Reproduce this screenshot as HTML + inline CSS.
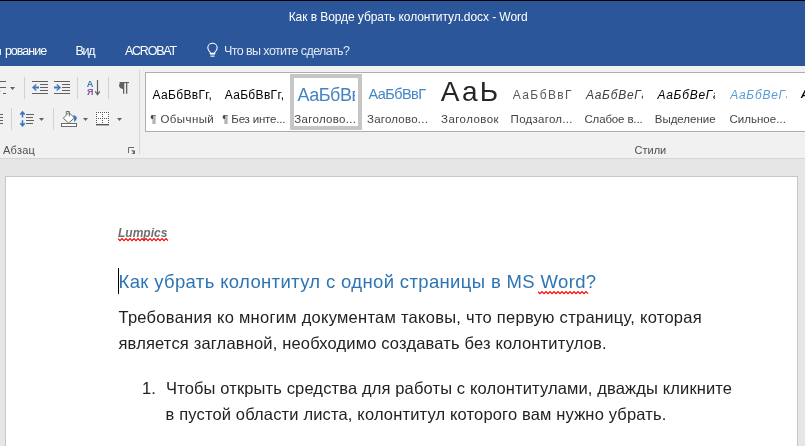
<!DOCTYPE html>
<html><head><meta charset="utf-8">
<style>
*{margin:0;padding:0;box-sizing:border-box}
body{will-change:transform}
html,body{width:805px;height:446px;overflow:hidden;background:#e6e6e6;font-family:"Liberation Sans",sans-serif}
.abs{position:absolute;white-space:nowrap}
#top{position:absolute;left:0;top:0;width:805px;height:66px;background:#2b579a;border-top:1px solid #000}
.tt{position:absolute;white-space:nowrap;color:#fff;font-size:12.5px}
#ribbon{position:absolute;left:0;top:66px;width:805px;height:93px;background:#f1f1f1;border-bottom:1px solid #d6d6d6}
.glab{position:absolute;white-space:nowrap;color:#505050;font-size:11px}
#gallery{position:absolute;left:145px;top:72px;width:700px;height:60px;background:#fff;border:1px solid #abadb3}
.smp{position:absolute;white-space:nowrap;font-size:11px}
.lbl{position:absolute;white-space:nowrap;font-size:11.5px;color:#444}
.clip{position:absolute;overflow:hidden;height:58px;top:73px}
#page{position:absolute;left:5px;top:176px;width:793px;height:300px;background:#fff;border:1px solid #c6c6c6}
.body{position:absolute;color:#222;font-size:16.5px;white-space:nowrap}
</style></head><body>
<div id="top"></div>
<div id="title" class="tt" style="left:288.7px;top:9.7px;font-size:12px;letter-spacing:-0.073px">Как в Ворде убрать колонтитул.docx - Word</div>
<div class="abs" style="left:0;top:48.6px;width:1.4px;height:6.2px;background:#fff;opacity:.85"></div>
<div id="tab0" class="tt" style="left:4.9px;top:44.0px;letter-spacing:-0.982px">рование</div>
<div id="tab1" class="tt" style="left:75.4px;top:44.0px;letter-spacing:-1.25px">Вид</div>
<div id="tab2" class="tt" style="left:124.9px;top:43.9px;letter-spacing:-1.214px">ACROBAT</div>
<div id="tab3" class="tt" style="left:224.0px;top:43.8px;color:#e3e9f3;letter-spacing:-0.584px">Что вы хотите сделать?</div>
<svg class="abs" style="left:205px;top:41px" width="16" height="18" viewBox="205 41 16 18">
  <path d="M210.2 52.3 C208.6 50.8 207.8 49.4 207.8 47.8 C207.8 45.2 210 43.3 212.5 43.3 C215 43.3 217.2 45.2 217.2 47.8 C217.2 49.4 216.4 50.8 214.8 52.3 L214.8 53.2 L210.2 53.2 Z" fill="none" stroke="#fff" stroke-width="1.1"/>
  <rect x="210" y="53" width="5" height="1.6" fill="#fff"/>
  <rect x="210.5" y="55.6" width="4" height="1.1" fill="#fff"/>
</svg>

<div id="ribbon"></div>
<svg class="abs" style="left:0;top:66px" width="145" height="92" viewBox="0 66 145 92">
  <g fill="#616161">
    <!-- list icon (cut) -->
    <rect x="0" y="81" width="6" height="1"/><rect x="0" y="87" width="6" height="1"/><rect x="3" y="93" width="3" height="1"/>
    <!-- indent dec -->
    <rect x="32" y="81" width="16" height="1"/><rect x="40" y="84" width="8" height="1"/><rect x="40" y="87" width="8" height="1"/><rect x="40" y="90" width="8" height="1"/><rect x="32" y="93" width="16" height="1"/>
    <!-- indent inc -->
    <rect x="54" y="81" width="16" height="1"/><rect x="62" y="84" width="8" height="1"/><rect x="62" y="87" width="8" height="1"/><rect x="62" y="90" width="8" height="1"/><rect x="54" y="93" width="16" height="1"/>
    <!-- line spacing lines -->
    <rect x="26" y="114" width="8" height="1"/><rect x="26" y="117" width="7" height="1"/><rect x="26" y="120" width="8" height="1"/><rect x="26" y="123" width="7" height="1"/>
    <!-- justify cut -->
    <rect x="0" y="114" width="3" height="1"/><rect x="0" y="117" width="3" height="1"/><rect x="0" y="120" width="3" height="1"/><rect x="0" y="123" width="3" height="1"/>
    <!-- dropdown arrows -->
    <path d="M10 87 L15 87 L12.5 90 Z"/>
    <path d="M39 118 L44 118 L41.5 121 Z"/>
    <path d="M83 118 L88 118 L85.5 121 Z"/>
    <path d="M117 118 L122 118 L119.5 121 Z"/>
    <!-- pilcrow -->
    <path d="M123.6 82 L123.6 89 C120.8 89 119 87.4 119 85.5 C119 83.5 120.8 82 123.6 82 Z"/>
    <rect x="119.5" y="82" width="9.5" height="1.1"/>
    <rect x="123" y="82" width="1.3" height="11.8"/>
    <rect x="126" y="82" width="1.3" height="11.8"/>
  </g>
  <rect x="0" y="90.5" width="1" height="1" fill="#a9c3e2"/>
  <!-- blue arrows indent -->
  <path d="M32 87.5 L35.8 84 L36.8 85 L34.8 86.6 L39 86.6 L39 88.4 L34.8 88.4 L36.8 90 L35.8 91 Z" fill="#3a78bd"/>
  <path d="M61 87.5 L57.2 84 L56.2 85 L58.2 86.6 L54 86.6 L54 88.4 L58.2 88.4 L56.2 90 L57.2 91 Z" fill="#3a78bd"/>
  <!-- line spacing arrows -->
  <path d="M22.5 111.8 L22.5 117.6 M20.3 114.6 L22.5 112 L24.7 114.6 M22.5 120.2 L22.5 126 M20.3 123.2 L22.5 125.8 L24.7 123.2" fill="none" stroke="#3a78bd" stroke-width="1.6"/>
  
  <!-- sort -->
  <text x="86.8" y="86.8" font-family="Liberation Sans" font-weight="bold" font-size="9.2" fill="#3b78bd">A</text>
  <text x="86.9" y="94.8" font-family="Liberation Sans" font-weight="bold" font-size="9" fill="#8a56ae">Я</text>
  <path d="M97.5 80 L97.5 94.3 M95.2 91.4 L97.5 94.6 L99.8 91.4" fill="none" stroke="#616161" stroke-width="1.2"/>
  <!-- shading -->
  <rect x="61.5" y="123.5" width="15" height="3" fill="#fff" stroke="#6a6a6a" stroke-width="1"/>
  <path d="M63.3 118.3 L68.8 112.6 L74.6 117.8 L68.6 123 Z" fill="#fff" stroke="#6a6a6a" stroke-width="1"/>
  <path d="M66.3 114.5 L66.3 111.5 L69.3 111.5 L69.3 116.5" fill="none" stroke="#6a6a6a" stroke-width="1"/>
  <path d="M73.2 115.2 C75.5 115.3 77 116.5 76.8 118.2 C76.6 119.8 75.2 121 74.2 122 L74 118.5 Z" fill="#3a78bd"/>
  <!-- borders -->
  <rect x="95.5" y="111.5" width="14" height="12" fill="#fbfbfb"/>
  <g fill="#555">
    <rect x="96" y="112" width="1" height="1"/><rect x="98" y="112" width="1" height="1"/><rect x="100" y="112" width="1" height="1"/><rect x="102" y="112" width="1" height="1"/><rect x="104" y="112" width="1" height="1"/><rect x="106" y="112" width="1" height="1"/><rect x="108" y="112" width="1" height="1"/>
    <rect x="96" y="118" width="1" height="1"/><rect x="98" y="118" width="1" height="1"/><rect x="100" y="118" width="1" height="1"/><rect x="102" y="118" width="1" height="1"/><rect x="104" y="118" width="1" height="1"/><rect x="106" y="118" width="1" height="1"/><rect x="108" y="118" width="1" height="1"/>
    <rect x="96" y="114" width="1" height="1"/><rect x="102" y="114" width="1" height="1"/><rect x="108" y="114" width="1" height="1"/>
    <rect x="96" y="116" width="1" height="1"/><rect x="102" y="116" width="1" height="1"/><rect x="108" y="116" width="1" height="1"/>
    <rect x="96" y="120" width="1" height="1"/><rect x="102" y="120" width="1" height="1"/><rect x="108" y="120" width="1" height="1"/>
    <rect x="96" y="122" width="1" height="1"/><rect x="102" y="122" width="1" height="1"/><rect x="108" y="122" width="1" height="1"/>
    <rect x="96" y="124" width="13" height="1.4"/>
  </g>
  <!-- separators -->
  <g fill="#d2d2d2">
    <rect x="24" y="77" width="1" height="22"/>
    <rect x="77" y="77" width="1" height="22"/>
    <rect x="108" y="77" width="1" height="22"/>
    <rect x="11" y="108" width="1" height="22"/>
    <rect x="53" y="108" width="1" height="22"/>
    <rect x="139" y="70" width="1" height="84" fill="#d6d6d6"/>
  </g>
  <!-- dialog launcher -->
  <path d="M128.5 153 L128.5 147.5 L134 147.5" fill="none" stroke="#6a6a6a" stroke-width="1"/>
  <path d="M131 150 L135 154 L135 150.5 Z M131.5 154 L135 154 L135 151" fill="#6a6a6a"/>
</svg>
<div id="g0" class="glab" style="left:3.0px;top:143.5px;letter-spacing:0.25px">Абзац</div>
<div id="g1" class="glab" style="left:634.6px;top:143.7px;letter-spacing:-0.025px">Стили</div>

<div id="gallery"></div>
<div class="abs" style="left:290px;top:74px;width:72px;height:56px;border:4px solid #c6c6c6;background:#fff"></div>
<div class="clip" style="left:150px;width:63px"><div id="s0" class="smp" style="left:2.6px;top:14.8px;color:#000;letter-spacing:0.325px;font-size:12px">АаБбВвГг,</div></div>
<div id="l0" class="lbl" style="left:150.2px;top:112.8px;letter-spacing:0.425px">¶ Обычный</div>
<div class="clip" style="left:222px;width:63px"><div id="s1" class="smp" style="left:2.7px;top:14.8px;color:#000;letter-spacing:0.325px;font-size:12px">АаБбВвГг,</div></div>
<div id="lb1" class="lbl" style="left:222.3px;top:112.8px;letter-spacing:-0.195px">¶ Без инте...</div>
<div class="clip" style="left:294px;width:61px;top:78px;height:40px"><div id="s2" class="smp" style="left:3.4px;top:6.8px;color:#4384c4;font-size:18px;letter-spacing:-0.45px">АаБбВвГг</div></div>
<div id="lb2" class="lbl" style="left:294.2px;top:112.8px;letter-spacing:0.32px">Заголово...</div>
<div class="clip" style="left:366px;width:63px"><div id="s3" class="smp" style="left:2.6px;top:12.7px;color:#4384c4;font-size:14.5px;letter-spacing:-0.572px">АаБбВвГ</div></div>
<div id="lb3" class="lbl" style="left:367.0px;top:112.8px;letter-spacing:0.22px">Заголово...</div>
<div class="clip" style="left:438px;width:63px"><div id="s4" class="smp" style="font-weight:normal;left:2.8px;top:2.9px;color:#262626;font-size:28px;letter-spacing:2.15px">АаЬ</div></div>
<div id="lb4" class="lbl" style="left:441.0px;top:112.8px;letter-spacing:0.438px">Заголовок</div>
<div class="clip" style="left:510px;width:63px"><div id="s5" class="smp" style="left:2.8px;top:14.8px;color:#5a5a5a;letter-spacing:1.381px;font-size:12px">АаБбВвГ</div></div>
<div id="lb5" class="lbl" style="left:510.6px;top:112.8px;letter-spacing:0.27px">Подзагол...</div>
<div class="clip" style="left:582px;width:61px"><div id="s6" class="smp" style="left:3.9px;top:14.8px;color:#404040;font-style:italic;font-size:12px;letter-spacing:0.75px">АаБбВеГг</div></div>
<div id="lb6" class="lbl" style="left:584.4px;top:112.8px;letter-spacing:-0.14px">Слабое в...</div>
<div class="clip" style="left:654px;width:61px"><div id="s7" class="smp" style="left:3.4px;top:14.8px;color:#000;font-style:italic;font-size:12px;letter-spacing:0.75px">АаБбВеГг</div></div>
<div id="lb7" class="lbl" style="left:654.8px;top:112.8px;letter-spacing:-0.025px">Выделение</div>
<div class="clip" style="left:726px;width:61px"><div id="s8" class="smp" style="left:4.2px;top:14.8px;color:#5b9bd5;font-style:italic;font-size:12px;letter-spacing:0.75px">АаБбВеГг</div></div>
<div id="lb8" class="lbl" style="left:729.4px;top:112.8px;letter-spacing:0.035px">Сильное...</div>
<div class="clip" style="left:798px;width:10px"><div class="smp" style="left:2.8px;top:15px;color:#000;font-style:italic;font-weight:bold">АаБб</div></div>

<div id="page"></div>
<div id="lum" class="body" style="left:118.0px;top:225.5px;font-size:12px;font-weight:bold;font-style:italic;color:#6e6e6e;letter-spacing:-0.005px">Lumpics</div>
<div id="h1" class="body" style="left:118.5px;top:271.0px;font-size:18.5px;color:#2e74b5;letter-spacing:0.352px">Как убрать колонтитул с одной страницы в MS Word?</div>
<div id="b1" class="body" style="left:118.5px;top:307.8px;letter-spacing:0.268px">Требования ко многим документам таковы, что первую страницу, которая</div>
<div id="b2" class="body" style="left:118.5px;top:333.8px;letter-spacing:0.17px">является заглавной, необходимо создавать без колонтитулов.</div>
<div id="num" class="body" style="left:142.0px;top:378.7px">1.</div>
<div id="l1" class="body" style="left:166.0px;top:378.7px;letter-spacing:0.137px">Чтобы открыть средства для работы с колонтитулами, дважды кликните</div>
<div id="l2" class="body" style="left:165.5px;top:404.8px;letter-spacing:0.158px">в пустой области листа, колонтитул которого вам нужно убрать.</div>
<div class="abs" style="left:118px;top:268px;width:1px;height:26px;background:#000"></div>
<svg class="abs" style="left:118px;top:238px" width="50" height="5" viewBox="0 0 50 5"><path d="M0 0.6 L2 2.7 L4 0.6 L6 2.7 L8 0.6 L10 2.7 L12 0.6 L14 2.7 L16 0.6 L18 2.7 L20 0.6 L22 2.7 L24 0.6 L26 2.7 L28 0.6 L30 2.7 L32 0.6 L34 2.7 L36 0.6 L38 2.7 L40 0.6 L42 2.7 L44 0.6 L46 2.7 L48 0.6 L50 2.7" fill="none" stroke="#f00" stroke-width="1.2"/></svg>
<svg class="abs" style="left:538px;top:291px" width="51" height="5" viewBox="0 0 51 5"><path d="M0 0.6 L2 2.7 L4 0.6 L6 2.7 L8 0.6 L10 2.7 L12 0.6 L14 2.7 L16 0.6 L18 2.7 L20 0.6 L22 2.7 L24 0.6 L26 2.7 L28 0.6 L30 2.7 L32 0.6 L34 2.7 L36 0.6 L38 2.7 L40 0.6 L42 2.7 L44 0.6 L46 2.7 L48 0.6 L50 2.7" fill="none" stroke="#f00" stroke-width="1.2"/></svg>
</body></html>
